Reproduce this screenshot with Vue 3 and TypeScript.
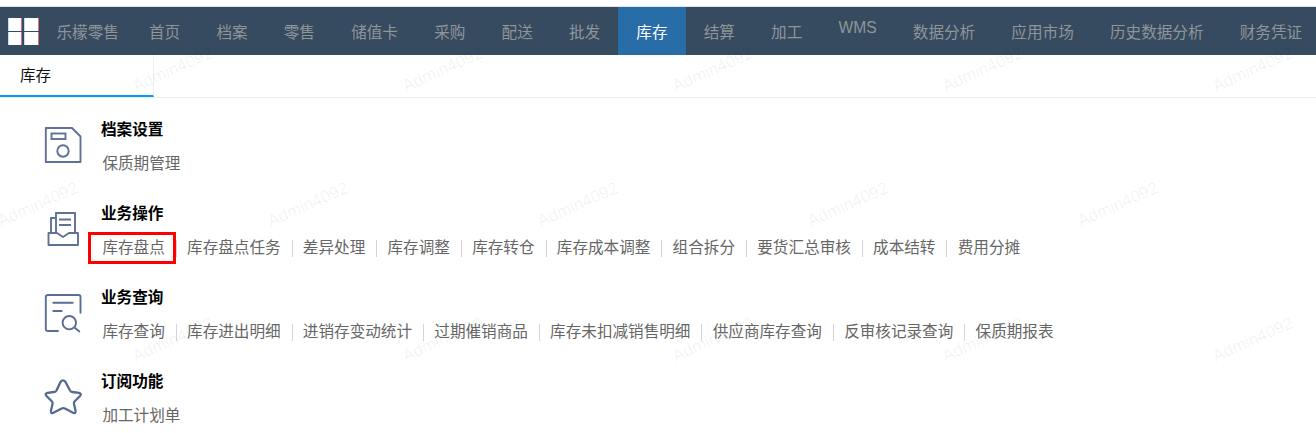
<script setup lang="ts">
const navItems: string[] = ['首页', '档案', '零售', '储值卡', '采购', '配送', '批发', '库存', '结算', '加工', 'WMS', '数据分析', '应用市场', '历史数据分析', '财务凭证']

interface Section { title: string; icon: string; links: string[] }
const sections: Section[] = [
  { title: '档案设置', icon: 'disk', links: ['保质期管理'] },
  { title: '业务操作', icon: 'tray', links: ['库存盘点', '库存盘点任务', '差异处理', '库存调整', '库存转仓', '库存成本调整', '组合拆分', '要货汇总审核', '成本结转', '费用分摊'] },
  { title: '业务查询', icon: 'query', links: ['库存查询', '库存进出明细', '进销存变动统计', '过期催销商品', '库存未扣减销售明细', '供应商库存查询', '反审核记录查询', '保质期报表'] },
  { title: '订阅功能', icon: 'star', links: ['加工计划单'] },
]

const marks: { x: number; y: number }[] = []
for (const [y, xs] of [
  [70, [173, 443, 713, 983, 1253]],
  [205, [38, 308, 578, 848, 1118]],
  [340, [173, 443, 713, 983, 1253]],
] as [number, number[]][]) {
  for (const x of xs) marks.push({ x, y })
}
</script>

<template>
  <div class="page">
    <header class="nav">
      <div class="logo"><i></i><i></i><i></i><i></i></div>
      <span class="brand">乐檬零售</span>
      <span
        v-for="item in navItems"
        :key="item"
        class="nav-item"
        :class="{ active: item === '库存', latin: item === 'WMS' }"
      >{{ item }}</span>
    </header>

    <div class="tabs">
      <div class="tab">库存</div>
    </div>

    <main class="content">
      <section v-for="s in sections" :key="s.title" class="section">
        <div class="icon">
          <svg v-if="s.icon === 'disk'" width="38" height="38" viewBox="0 0 38 38" fill="none" stroke="#5f7196" stroke-width="1.900">
            <path d="M1.800 2H28L36.500 10.500V36H1.800Z" stroke-linejoin="round" />
            <rect x="7.500" y="7.500" width="14" height="5.500" />
            <circle cx="19" cy="25" r="5.700" />
          </svg>
          <svg v-else-if="s.icon === 'tray'" width="32" height="36" viewBox="0 0 32 36" fill="none" stroke="#5f7196" stroke-width="1.900">
            <path d="M9 23V3H28V23" />
            <path d="M9 8H4V23" />
            <path d="M12 9.500H24M12 15H24" />
            <path d="M1.500 23H10L16 27L22 23H31V35H1.500Z" stroke-linejoin="round" />
          </svg>
          <svg v-else-if="s.icon === 'query'" width="38" height="40" viewBox="0 0 38 40" fill="none" stroke="#5a6d94" stroke-width="1.900" stroke-linecap="round">
            <path d="M14 37H4Q1.800 37 1.800 35V3Q1.800 1 4 1H34.500Q36.500 1 36.500 3V18.700" />
            <path d="M9.300 8.700H28.700M9.300 17H17.700" />
            <circle cx="25.300" cy="28.700" r="6.700" />
            <path d="M30.500 33.500L35.300 37.500" />
          </svg>
          <svg v-else width="40" height="38" viewBox="0 0 40 38" fill="none" stroke="#56698f" stroke-width="2.300" stroke-linejoin="round">
            <path d="M17.500 4Q20 0.800 22.500 4L27 12.500Q27.800 13.800 29.500 14L36 14.900Q39 15.500 37 18L31.500 23.500Q30.600 24.500 31 26L32.500 32.500Q33 36 30 34.800L22 30.500Q20.300 29.700 18.600 30.500L10.500 34.800Q7.500 36 8 32.500L9.500 26Q9.900 24.500 9 23.500L3.500 18Q1.500 15.500 4.500 14.900L11 14Q12.700 13.800 13.500 12.500Z" />
          </svg>
        </div>
        <div class="body">
          <h3 class="title">{{ s.title }}</h3>
          <div class="links">
            <span
              v-for="(link, i) in s.links"
              :key="link"
              class="link"
              :class="{ boxed: link === '库存盘点' }"
            >{{ link }}<span v-if="i < s.links.length - 1" class="sep"></span></span>
          </div>
        </div>
      </section>
    </main>

    <span
      v-for="m in marks"
      :key="`${m.x}-${m.y}`"
      class="mark"
      :style="{ left: m.x + 'px', top: m.y + 'px' }"
    >Admin4092</span>
  </div>
</template>

<style>
html, body { margin: 0; background: #fff; }
</style>

<style scoped>
.page {
  position: relative;
  height: 433px;
  overflow: hidden;
  padding-top: 7px;
  box-sizing: border-box;
  background: #fff;
  font-family: "Liberation Sans", "Noto Sans CJK SC", sans-serif;
  font-size: 15.6px;
}
.nav {
  display: flex;
  align-items: center;
  height: 48px;
  background: #364a60;
  color: #90959a;
  white-space: nowrap;
  box-shadow: 0 -1px 0 #e4e4e4;
}
.logo {
  display: grid;
  grid-template-columns: 14px 15px;
  grid-template-rows: 13px 13px;
  gap: 1px 2px;
  margin-left: 8px;
}
.logo i {
  background: #fff;
  border-right: 1px solid #d9707c;
  border-left: 1px solid #c4d8ff;
  box-sizing: border-box;
}
.brand { margin-left: 17.500px; margin-right: 12px; }
.nav-item {
  display: flex;
  align-items: center;
  height: 48px;
  padding: 0 18.100px 1px;
  box-sizing: border-box;
}
.nav-item.latin { padding-bottom: 7px; }
.nav-item.active {
  background: #286da8;
  color: #fff;
}
.tabs {
  height: 43px;
  box-sizing: border-box;
  border-bottom: 1px solid #eeeeee;
}
.tab {
  width: 154px;
  height: 42px;
  box-sizing: border-box;
  padding-left: 20px;
  line-height: 41px;
  color: #111;
  border-bottom: 2px solid #0099ff;
  border-right: 1px solid #eeeeee;
}
.content { padding-top: 20px; }
.section {
  display: flex;
  height: 84px;
}
.icon {
  width: 101px;
  flex: none;
  display: flex;
  justify-content: center;
  padding: 8px 0 0 25px;
  box-sizing: border-box;
}
.icon svg { display: block; }
.title {
  margin: 0 0 10px;
  font-size: 15.6px;
  line-height: 24px;
  font-weight: 700;
  color: #000;
}
.links {
  display: flex;
  margin-left: 1.400px;
  line-height: 24px;
  color: #666;
}
.link {
  position: relative;
  display: flex;
  align-items: center;
  margin-right: 22.250px;
  white-space: nowrap;
}
.sep {
  position: absolute;
  right: -12px;
  top: 4px;
  width: 1px;
  height: 17px;
  background: #d5d5d5;
}
.boxed::after {
  content: "";
  position: absolute;
  left: -14.400px;
  right: -11.300px;
  top: -4px;
  bottom: -3.700px;
  border: 3.500px solid #f00;
}
.mark {
  position: absolute;
  transform: translate(-50%, -50%) rotate(-24deg);
  font-size: 17px;
  color: rgba(0, 0, 0, 0.06);
  white-space: nowrap;
  pointer-events: none;
}
</style>
